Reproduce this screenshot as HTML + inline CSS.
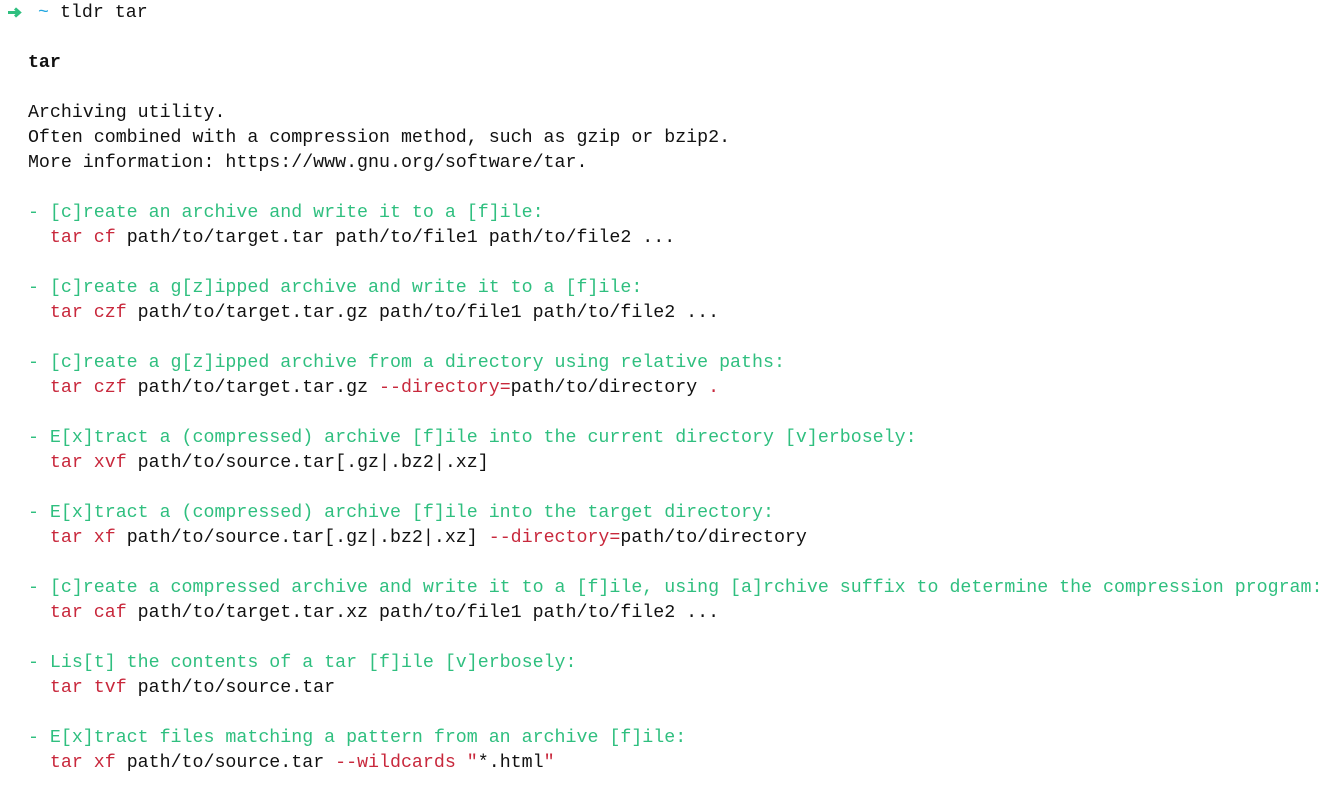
<!DOCTYPE html>
<html><head><meta charset="utf-8"><style>
html,body{margin:0;background:#fff;width:1344px;height:792px;overflow:hidden}
pre{margin:0;padding:1px 0 0 6px;font-family:"Liberation Mono","DejaVu Sans Mono",monospace;font-size:18.3px;line-height:25px;color:#111;white-space:pre}
.g{color:#2fbf7f}.r{color:#c8283c}.c{color:#22a7e0}b{font-weight:bold}
.ar{display:inline-block;width:15px;height:11px;vertical-align:-1px;margin-left:1px;margin-right:16px}
</style></head><body><pre><svg class="ar" viewBox="0 0 15 11"><path d="M1 5.5H12M8 1.5L12.5 5.5L8 9.5" stroke="#2fbf7f" stroke-width="3" fill="none"/></svg><span class="c">~</span> tldr tar

  <b>tar</b>

  Archiving utility.
  Often combined with a compression method, such as gzip or bzip2.
  More information: https://www.gnu.org/software/tar.

<span class="g">  - [c]reate an archive and write it to a [f]ile:</span>
    <span class="r">tar cf</span> path/to/target.tar path/to/file1 path/to/file2 ...

<span class="g">  - [c]reate a g[z]ipped archive and write it to a [f]ile:</span>
    <span class="r">tar czf</span> path/to/target.tar.gz path/to/file1 path/to/file2 ...

<span class="g">  - [c]reate a g[z]ipped archive from a directory using relative paths:</span>
    <span class="r">tar czf</span> path/to/target.tar.gz <span class="r">--directory=</span>path/to/directory <span class="r">.</span>

<span class="g">  - E[x]tract a (compressed) archive [f]ile into the current directory [v]erbosely:</span>
    <span class="r">tar xvf</span> path/to/source.tar[.gz|.bz2|.xz]

<span class="g">  - E[x]tract a (compressed) archive [f]ile into the target directory:</span>
    <span class="r">tar xf</span> path/to/source.tar[.gz|.bz2|.xz] <span class="r">--directory=</span>path/to/directory

<span class="g">  - [c]reate a compressed archive and write it to a [f]ile, using [a]rchive suffix to determine the compression program:</span>
    <span class="r">tar caf</span> path/to/target.tar.xz path/to/file1 path/to/file2 ...

<span class="g">  - Lis[t] the contents of a tar [f]ile [v]erbosely:</span>
    <span class="r">tar tvf</span> path/to/source.tar

<span class="g">  - E[x]tract files matching a pattern from an archive [f]ile:</span>
    <span class="r">tar xf</span> path/to/source.tar <span class="r">--wildcards "</span>*.html<span class="r">"</span>
</pre></body></html>
